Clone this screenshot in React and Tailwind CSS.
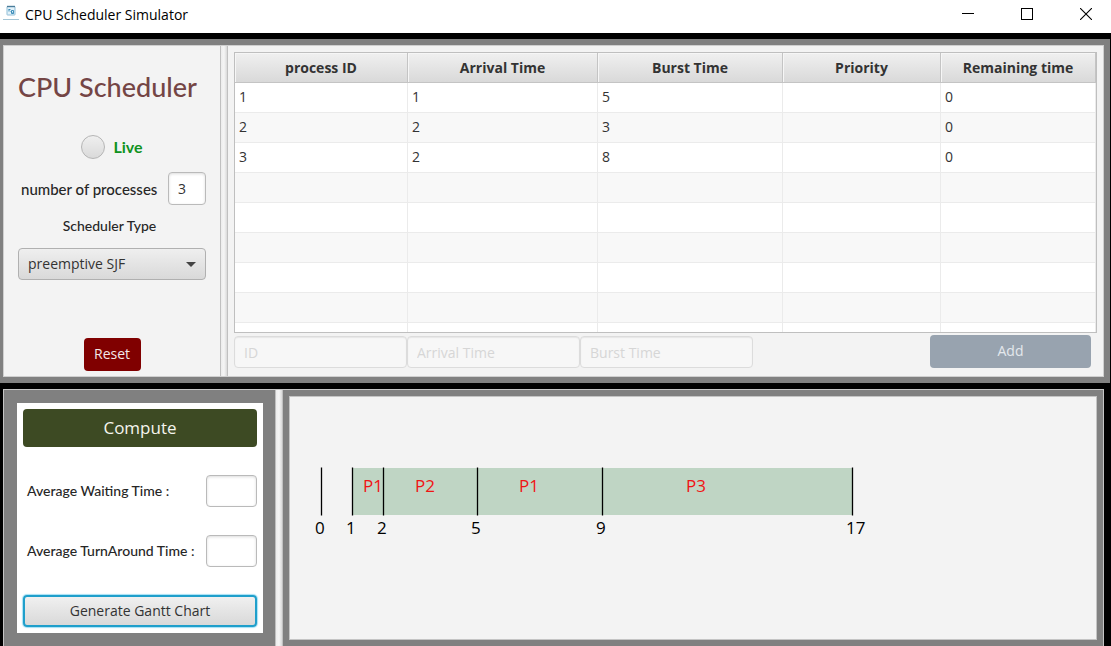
import React from "react";

const columns = [
  { name: "process ID", width: "w-[173px]" },
  { name: "Arrival Time", width: "w-[190px]" },
  { name: "Burst Time", width: "w-[185px]" },
  { name: "Priority", width: "w-[158px]" },
  { name: "Remaining time", width: "" },
];

const rows = [
  ["1", "1", "5", "", "0"],
  ["2", "2", "3", "", "0"],
  ["3", "2", "8", "", "0"],
  ["", "", "", "", ""],
  ["", "", "", "", ""],
  ["", "", "", "", ""],
  ["", "", "", "", ""],
  ["", "", "", "", ""],
  ["", "", "", "", ""],
];

const ticks = [
  { x: 31, label: "0" },
  { x: 62, label: "1" },
  { x: 93, label: "2" },
  { x: 187, label: "5" },
  { x: 312, label: "9" },
  { x: 562, label: "17" },
];

const segments = [
  { x: 73, label: "P1" },
  { x: 125, label: "P2" },
  { x: 229, label: "P1" },
  { x: 396, label: "P3" },
];

const textBox =
  "rounded-[4px] border border-[#bababa] bg-white shadow-[inset_0_1px_3px_rgba(0,0,0,0.14)]";

const fieldLabel = "whitespace-nowrap font-['Lato',sans-serif] font-medium leading-5 text-[#262626]";

function TitleBar() {
  return (
    <header className="flex h-[33px] items-start bg-white pl-[3px] pr-[19px] text-black">
      <svg className="mt-[5px] h-4 w-4" viewBox="0 0 16 16" aria-hidden="true">
        <rect x="4" y="1.5" width="8" height="8.5" rx="0.5" fill="#e3f2fa" stroke="#8fbdd6" />
        <path d="M4 1.5h8" stroke="#4a7c9a" strokeWidth="1.4" />
        <path d="M5.5 4.5h2M6 4.5v2M7.5 6l2.5 2.5M8.5 5.5h2v3h-2z" fill="none" stroke="#3087b5" strokeWidth="0.9" />
        <path d="M0 14.5h16" stroke="#a3c5d6" />
      </svg>
      <span className="ml-[6px] mt-[5px] text-[14px] leading-5">CPU Scheduler Simulator</span>
      <div className="ml-auto mt-2 flex gap-[47px]">
        <button type="button" aria-label="Minimize">
          <svg className="block h-3 w-3" viewBox="0 0 12 12" shapeRendering="crispEdges">
            <path d="M0 5.5h12" stroke="#000" />
          </svg>
        </button>
        <button type="button" aria-label="Maximize">
          <svg className="block h-3 w-3" viewBox="0 0 12 12" shapeRendering="crispEdges">
            <rect x="0.5" y="0.5" width="11" height="11" fill="none" stroke="#000" />
          </svg>
        </button>
        <button type="button" aria-label="Close">
          <svg className="block h-3 w-3" viewBox="0 0 12 12">
            <path d="M0 0l12 12M12 0L0 12" stroke="#000" strokeWidth="1.1" />
          </svg>
        </button>
      </div>
    </header>
  );
}

function Divider() {
  return (
    <div className="w-2 shrink-0 border-x border-[#c0c0c0] bg-linear-to-r from-[#ececec] via-[#f5f5f5] to-[#d9d9d9]" />
  );
}

function Settings() {
  return (
    <section className="flex w-[216px] shrink-0 flex-col px-[14px] pb-[5px] pt-[23px]">
      <h1 className="whitespace-nowrap font-['Lato',sans-serif] text-[27px] font-medium leading-9 text-[#744545]">
        CPU Scheduler
      </h1>
      <label className="mt-[30px] flex h-6 items-center justify-center gap-2 font-['Lato',sans-serif] text-[16px] font-bold text-[#0f9220]">
        <input
          type="radio"
          name="live"
          className="h-6 w-6 appearance-none rounded-full border border-[#b5b5b5] bg-linear-to-b from-[#efefef] to-[#dadada]"
        />
        Live
      </label>
      <div className="mt-[13px] flex h-[33px] items-center justify-between pl-[3px]">
        <label htmlFor="count" className={`text-[15px] ${fieldLabel}`}>
          number of processes
        </label>
        <input id="count" defaultValue="3" className={`h-[33px] w-[38px] pl-[9px] text-[14px] ${textBox}`} />
      </div>
      <label htmlFor="type" className={`mt-[11px] self-center pr-[5px] text-[14px] ${fieldLabel}`}>
        Scheduler Type
      </label>
      <div className="relative mt-3">
        <select
          id="type"
          className="block h-8 w-full appearance-none rounded-[4px] border border-[#b0b0b0] bg-linear-to-b from-[#efefef] to-[#d9d9d9] pb-[2px] pl-[9px] text-[14px]"
        >
          <option>preemptive SJF</option>
        </select>
        <svg
          className="pointer-events-none absolute right-[10px] top-[14px] h-[5px] w-[10px]"
          viewBox="0 0 10 5"
          aria-hidden="true"
        >
          <path d="M0 0h10L5 5z" fill="#444" />
        </svg>
      </div>
      <button
        type="button"
        className="mt-[58px] h-[33px] w-[57px] self-center rounded-[4px] bg-[#800000] pb-[2px] text-[14px] text-[#f3e8e8]"
      >
        Reset
      </button>
    </section>
  );
}

function ProcessTable() {
  return (
    <div className="h-[281px] overflow-hidden border border-[#bfbfbf] bg-white">
      <table className="w-full table-fixed border-separate border-spacing-0">
        <thead>
          <tr className="h-[30px]">
            {columns.map((c) => (
              <th
                key={c.name}
                className={`border-b border-r border-[#c4c4c4] bg-linear-to-b from-[#f0f0f0] to-[#d9d9d9] p-0 text-[14px] font-bold leading-5 shadow-[inset_1px_1px_0_#f6f6f6] ${c.width}`}
              >
                {c.name}
              </th>
            ))}
          </tr>
        </thead>
        <tbody>
          {rows.map((row, i) => (
            <tr key={i} className="h-[30px] odd:bg-white even:bg-[#f8f8f8]">
              {row.map((value, j) => (
                <td key={j} className="border-b border-r border-[#ebebeb] p-0 pb-[2px] pl-1 text-[14px] leading-5">
                  {value}
                </td>
              ))}
            </tr>
          ))}
        </tbody>
      </table>
    </div>
  );
}

function Processes() {
  return (
    <section className="flex min-w-0 flex-1 flex-col px-[6px] pt-[6px]">
      <ProcessTable />
      <form className="mt-[2px] flex items-start" onSubmit={(e) => e.preventDefault()}>
        <div className="mt-px flex">
          {["ID", "Arrival Time", "Burst Time"].map((name) => (
            <input
              key={name}
              disabled
              aria-label={name}
              placeholder={name}
              className="h-8 w-[173px] rounded-[4px] border border-[#dcdcdc] bg-[#f7f7f7] pl-[9px] text-[14px] shadow-[inset_0_1px_1px_#e6e6e6] placeholder:text-[#d6d6d6]"
            />
          ))}
        </div>
        <button
          type="submit"
          disabled
          className="ml-auto mr-[6px] h-[33px] w-[161px] rounded-[4px] bg-[#98a3af] pb-[2px] text-[14px] text-[#e4e8ec]"
        >
          Add
        </button>
      </form>
    </section>
  );
}

function Results() {
  return (
    <section className="w-[271px] shrink-0 bg-[#808080] px-3 py-[13px]">
      <div className="ml-px flex flex-col gap-7 bg-white p-[6px]">
        <button type="button" className="h-[38px] rounded-[4px] bg-[#3d4a23] text-[17px] text-[#f5f5ee]">
          Compute
        </button>
        <div className="flex items-center justify-between pl-1">
          <label htmlFor="waiting" className={`text-[14px] ${fieldLabel}`}>
            Average Waiting Time :
          </label>
          <input id="waiting" readOnly className={`h-8 w-[51px] ${textBox}`} />
        </div>
        <div className="flex items-center justify-between pl-1">
          <label htmlFor="turnaround" className={`text-[14px] ${fieldLabel}`}>
            Average TurnAround Time :
          </label>
          <input id="turnaround" readOnly className={`h-8 w-[51px] ${textBox}`} />
        </div>
        <button
          type="button"
          className="h-8 rounded-[4px] border-2 border-[#1f9fcb] bg-linear-to-b from-[#f0f0f0] to-[#d9d9d9] pb-[2px] text-[14px] shadow-[0_0_1px_1px_#a5e0f5]"
        >
          Generate Gantt Chart
        </button>
      </div>
    </section>
  );
}

function GanttChart() {
  return (
    <section className="flex min-w-0 flex-1 flex-col bg-[#808080] p-[6px]">
      <div className="flex-1 border border-[#c4c4c4] bg-[#f3f3f3] pt-[70px]">
        <svg width="600" height="80" className="block text-[17px]" role="img" aria-label="Gantt chart">
          <rect x="62" y="1" width="500" height="47" fill="#bfd5c4" />
          {ticks.map((t) => (
            <g key={t.label}>
              <path d={`M${t.x + 0.5} 0.5v48`} stroke="#000" strokeWidth="1.3" />
              <text x={t.x - 6} y="67" fill="#000">
                {t.label}
              </text>
            </g>
          ))}
          {segments.map((s) => (
            <text key={s.x} x={s.x} y="25" fill="#f01414">
              {s.label}
            </text>
          ))}
        </svg>
      </div>
    </section>
  );
}

export default function App() {
  return (
    <div className="flex min-h-screen flex-col bg-black font-['Open_Sans','Noto_Sans',sans-serif] text-[#333]">
      <TitleBar />
      <main className="flex flex-1 flex-col pt-[6px]">
        <div className="mr-px bg-[#808080] pb-[6px] pl-[3px] pr-[6px] pt-[6px]">
          <div className="flex border border-[#cfcfcf] bg-[#f3f3f3]">
            <Settings />
            <Divider />
            <Processes />
          </div>
        </div>
        <div className="ml-[3px] mr-[7px] mt-[6px] flex flex-1 border border-b-0 border-[#c4c4c4]">
          <Results />
          <Divider />
          <GanttChart />
        </div>
      </main>
    </div>
  );
}
